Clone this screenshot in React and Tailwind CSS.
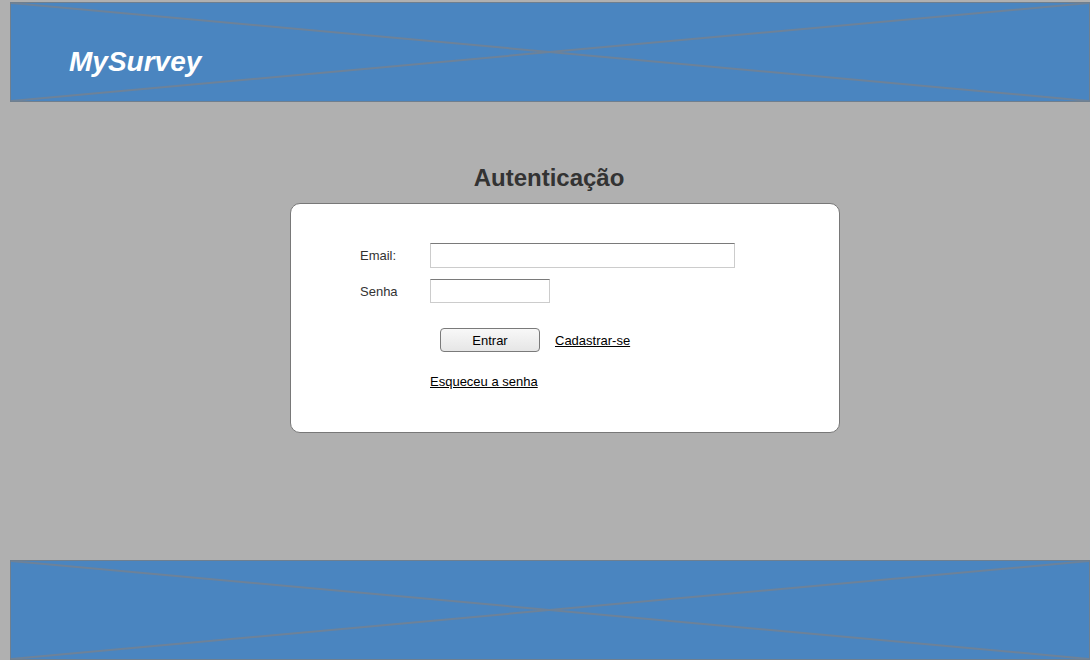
const Placeholder = () => (
  <svg
    className="absolute inset-0 w-full h-full"
    viewBox="0 0 100 100"
    preserveAspectRatio="none"
  >
    <line x1="0" y1="0" x2="100" y2="100" stroke="#6d8299" strokeWidth="2" vectorEffect="non-scaling-stroke" />
    <line x1="0" y1="100" x2="100" y2="0" stroke="#6d8299" strokeWidth="2" vectorEffect="non-scaling-stroke" />
  </svg>
);

const Band = ({ children, className }) => (
  <div
    className={`relative ml-[10px] h-[100px] bg-[#4a85c0] border border-[#6f7f8f] overflow-hidden ${className || ""}`}
  >
    <Placeholder />
    {children}
  </div>
);

const App = () => {
  return (
    <div className="w-[1090px] h-[660px] bg-[#b0b0b0] font-['Liberation_Sans',Arial,sans-serif] overflow-hidden">
      <div className="pt-[2px]">
        <Band>
          <div className="relative pl-[58px] pt-[41px] text-[28px] leading-[36px] font-bold italic text-white">
            MySurvey
          </div>
        </Band>
      </div>

      <main className="h-[458px] pt-[62px]">
        <h1 className="pl-[8px] text-center text-[24px] leading-[28px] font-bold text-[#333]">
          Autenticação
        </h1>
        <div className="ml-[290px] mt-[11px] w-[550px] h-[230px] bg-white border border-[#787878] rounded-[10px] pt-[39px] pl-[69px] text-[13px] text-[#333]">
          <div className="flex items-center h-[25px]">
            <label className="w-[70px]">Email:</label>
            <input
              type="text"
              className="w-[305px] h-[25px] border border-[#cccccc] border-t-[#7a7a7a] bg-white outline-none"
            />
          </div>
          <div className="flex items-center h-[24px] mt-[11px]">
            <label className="w-[70px] pt-[1px]">Senha</label>
            <input
              type="password"
              className="w-[120px] h-[24px] border border-[#cccccc] border-t-[#7a7a7a] bg-white outline-none"
            />
          </div>
          <div className="flex items-center mt-[25px] pl-[80px]">
            <button className="w-[100px] h-[24px] pt-[2px] rounded-[4px] border border-[#7a7a7a] bg-gradient-to-b from-[#f8f8f8] to-[#e6e6e6] text-[13px] text-black">
              Entrar
            </button>
            <a href="#" className="ml-[15px] pt-[1px] underline text-black">
              Cadastrar-se
            </a>
          </div>
          <div className="mt-[20px] pl-[70px]">
            <a href="#" className="underline text-black">
              Esqueceu a senha
            </a>
          </div>
        </div>
      </main>

      <Band />
    </div>
  );
};

export default App;
